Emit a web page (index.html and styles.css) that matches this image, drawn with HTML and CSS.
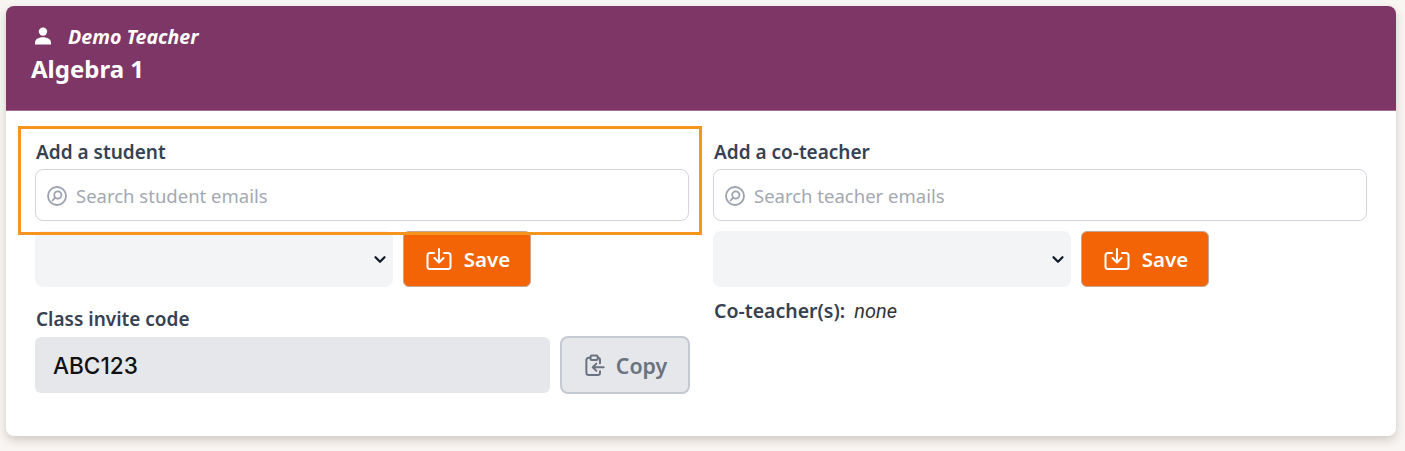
FILE: index.html
```html
<!DOCTYPE html>
<html lang="en">
<head>
    <meta charset="UTF-8">
    <meta name="viewport" content="width=device-width, initial-scale=1.0">
    <title>Algebra 1</title>
    <link rel="stylesheet" href="styles.css">
</head>
<body>
    <div class="card">
        <div class="card-header">
            <div class="teacher">
                <svg class="user-icon" viewBox="0 0 18 18" fill="#fff"><circle cx="9" cy="4.6" r="4.2"/><path d="M1 17.6v-1.8c0-3.4 3-5.6 8-5.6s8 2.200 8 5.600v1.800z"/></svg>
                <em>Demo Teacher</em>
            </div>
            <div class="class-name">Algebra 1</div>
        </div>
        <div class="card-body">
            <div class="col">
                <div class="highlight"></div>
                <label class="field-label">Add a student</label>
                <div class="search">
                    <svg class="search-icon" viewBox="0 0 20 20" fill="none" stroke="#9ca3af" stroke-width="1.800"><circle cx="10" cy="10" r="9"/><circle cx="10.800" cy="9" r="3.600"/><path d="M8.200 11.600 5.500 14.500" stroke-linecap="round"/></svg>
                    <span>Search student emails</span>
                </div>
                <div class="save-row">
                    <select class="picker"><option></option></select>
                    <button class="btn-save">
                        <svg class="btn-icon" viewBox="0 0 26 24" fill="none" stroke="#fff" stroke-width="2" stroke-linecap="round" stroke-linejoin="round"><path d="M8 6H4a2.500 2.500 0 0 0-2.500 2.500v11A2.500 2.500 0 0 0 4 22h18a2.500 2.500 0 0 0 2.500-2.500v-11A2.500 2.500 0 0 0 22 6h-4"/><path d="M13 2v13M8.500 11l4.500 4.500 4.500-4.500"/></svg>
                        Save
                    </button>
                </div>
                <label class="field-label invite-label">Class invite code</label>
                <div class="invite-row">
                    <div class="code">ABC123</div>
                    <button class="btn-copy">
                        <svg class="copy-icon" viewBox="0 0 22 24" fill="none" stroke="#6b7280" stroke-width="2.200" stroke-linecap="round" stroke-linejoin="round"><path d="M6 4H4a2.500 2.500 0 0 0-2.500 2.500v14A2.500 2.500 0 0 0 4 23h10a2.500 2.500 0 0 0 2.500-2.500V19"/><path d="M14 4h.5A2.500 2.500 0 0 1 16.500 6.500V10"/><rect x="6" y="1.500" width="8" height="5" rx="1.500"/><path d="M20.500 14.500H9M12.500 10.500l-4 4 4 4"/></svg>
                        Copy
                    </button>
                </div>
            </div>
            <div class="col">
                <label class="field-label">Add a co-teacher</label>
                <div class="search">
                    <svg class="search-icon" viewBox="0 0 20 20" fill="none" stroke="#9ca3af" stroke-width="1.800"><circle cx="10" cy="10" r="9"/><circle cx="10.800" cy="9" r="3.600"/><path d="M8.200 11.600 5.500 14.500" stroke-linecap="round"/></svg>
                    <span>Search teacher emails</span>
                </div>
                <div class="save-row wide">
                    <select class="picker"><option></option></select>
                    <button class="btn-save">
                        <svg class="btn-icon" viewBox="0 0 26 24" fill="none" stroke="#fff" stroke-width="2" stroke-linecap="round" stroke-linejoin="round"><path d="M8 6H4a2.500 2.500 0 0 0-2.500 2.500v11A2.500 2.500 0 0 0 4 22h18a2.500 2.500 0 0 0 2.500-2.500v-11A2.500 2.500 0 0 0 22 6h-4"/><path d="M13 2v13M8.500 11l4.500 4.500 4.500-4.500"/></svg>
                        Save
                    </button>
                </div>
                <div class="co-teachers"><strong>Co-teacher(s):</strong> <em>none</em></div>
            </div>
        </div>
    </div>
</body>
</html>
```

FILE: styles.css
```css
* {
    box-sizing: border-box;
}
body {
    margin: 0;
    padding: 6px 9px 0 6px;
    height: 451px;
    overflow: hidden;
    background: #f9f5f2;
    font-family: "Noto Sans", Arial, sans-serif;
    color: #374151;
}
.card {
    height: 430px;
    background: white;
    border-radius: 8px;
    overflow: hidden;
    box-shadow: 0 4px 10px rgba(60, 50, 40, 0.22);
}
.card-header {
    height: 105px;
    padding: 16px 25px;
    background: #7e3667;
    border-bottom: 1px solid #a56f94;
    color: white;
}
.teacher {
    display: flex;
    align-items: center;
    gap: 16px;
    height: 28px;
    padding-left: 3px;
    font-size: 19.600px;
    font-weight: 700;
}
.user-icon {
    width: 18px;
    height: 18px;
}
.class-name {
    margin-top: 4px;
    font-size: 24px;
    line-height: 30px;
    font-weight: 700;
}
.card-body {
    display: flex;
    gap: 24px;
    padding: 27px 29px 0;
}
.col {
    position: relative;
    width: 654px;
}
.highlight {
    position: absolute;
    left: -17px;
    top: -12px;
    width: 684px;
    height: 109px;
    border: 3px solid #f7941d;
    pointer-events: none;
}
.field-label {
    display: block;
    height: 26px;
    padding-left: 1px;
    font-size: 19px;
    line-height: 28px;
    font-weight: 600;
}
.search {
    display: flex;
    align-items: center;
    gap: 9px;
    height: 52px;
    margin-top: 5px;
    padding: 1px 0 0 12px;
    border: 1px solid #d1d5db;
    border-radius: 8px;
    color: #a3a8b2;
    font-size: 18.500px;
}
.search-icon {
    width: 20px;
    height: 20px;
    margin-left: -1px;
}
.save-row {
    display: flex;
    gap: 10px;
    margin-top: 10px;
}
.picker {
    width: 358px;
    height: 56px;
    border: none;
    border-radius: 8px;
    appearance: none;
    background: #f3f4f6 url("data:image/svg+xml,%3Csvg xmlns='http://www.w3.org/2000/svg' viewBox='0 0 12 8' fill='none' stroke='%23111827' stroke-width='2' stroke-linecap='round' stroke-linejoin='round'%3E%3Cpath d='M2 2l4 4 4-4'/%3E%3C/svg%3E") no-repeat right 6px center / 14px 9px;
    color: #111827;
}
.btn-save {
    display: flex;
    align-items: center;
    justify-content: center;
    gap: 12px;
    width: 128px;
    height: 56px;
    padding-left: 8px;
    background: #f26406;
    color: white;
    border: 1px solid #c9a48f;
    border-radius: 6px;
    font-family: inherit;
    font-size: 20.500px;
    font-weight: 600;
}
.btn-icon {
    width: 26px;
    height: 24px;
}
.invite-label {
    margin-top: 18px;
}
.invite-row {
    display: flex;
    align-items: center;
    gap: 10px;
    margin-top: 5px;
}
.code {
    flex: none;
    width: 515px;
    height: 56px;
    padding-left: 18px;
    border-radius: 6px;
    background: #e5e7eb;
    color: #111;
    font-family: Inter, Arial, sans-serif;
    font-size: 22.600px;
    font-weight: 500;
    line-height: 58px;
}
.btn-copy {
    flex: none;
    display: flex;
    align-items: center;
    justify-content: center;
    gap: 11px;
    width: 130px;
    height: 58px;
    padding-left: 8px;
    background: #e5e7eb;
    color: #6b7280;
    border: 2px solid #c5c9d1;
    border-radius: 8px;
    font-family: inherit;
    font-size: 21.400px;
    font-weight: 600;
}
.copy-icon {
    width: 20px;
    height: 22px;
}
.co-teachers {
    margin-top: 11px;
    padding-left: 1px;
    font-size: 19.500px;
    line-height: 26px;
}
.co-teachers strong {
    font-weight: 600;
    margin-right: 4px;
}
.co-teachers em {
    font-family: Roboto, Arial, sans-serif;
    font-size: 20px;
    color: #333;
}
```
